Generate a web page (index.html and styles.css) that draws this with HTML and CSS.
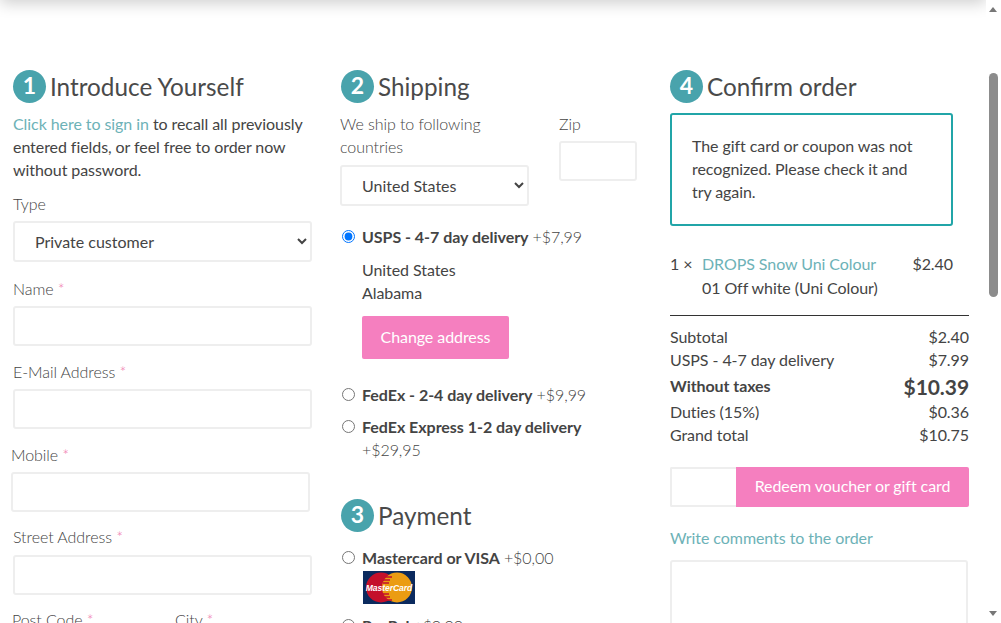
FILE: index.html
```html
<!DOCTYPE html>
<html lang="en">
<head>
    <meta charset="UTF-8">
    <title>Checkout</title>
    <link rel="stylesheet" href="styles.css">
</head>
<body>
    <div class="page">
        <div class="top-shadow"></div>
        <main class="checkout">
            <section class="col">
                <h2 class="step"><span class="step-num">1</span>Introduce Yourself</h2>
                <p class="intro"><a href="#">Click here to sign in</a> to recall all previously entered fields, or feel free to order now without password.</p>
                <label class="field-label type-label">Type</label>
                <select class="control select-type"><option>Private customer</option></select>
                <label class="field-label">Name <span class="req">*</span></label>
                <input class="control" type="text">
                <label class="field-label">E-Mail Address <span class="req">*</span></label>
                <input class="control" type="text">
                <div class="shifted">
                    <label class="field-label">Mobile <span class="req">*</span></label>
                    <input class="control" type="text">
                </div>
                <label class="field-label street-label">Street Address <span class="req">*</span></label>
                <input class="control" type="text">
                <div class="post-row">
                    <label class="field-label">Post Code <span class="req">*</span></label>
                    <label class="field-label">City <span class="req">*</span></label>
                </div>
            </section>

            <section class="col">
                <h2 class="step"><span class="step-num">2</span>Shipping</h2>
                <div class="ship-row">
                    <div class="ship-country">
                        <label class="field-label">We ship to following countries</label>
                        <select class="control select-country"><option>United States</option></select>
                    </div>
                    <div class="ship-zip">
                        <label class="field-label">Zip</label>
                        <input class="control" type="text">
                    </div>
                </div>
                <label class="option first-option">
                    <input type="radio" name="ship" checked>
                    <span><b>USPS - 4-7 day delivery</b> <i>+$7,99</i></span>
                </label>
                <div class="address">United States<br>Alabama</div>
                <button class="btn change-btn">Change address</button>
                <label class="option fedex-option">
                    <input type="radio" name="ship">
                    <span><b>FedEx - 2-4 day delivery</b> <i>+$9,99</i></span>
                </label>
                <label class="option express-option">
                    <input type="radio" name="ship">
                    <span><b>FedEx Express 1-2 day delivery</b> <i>+$29,95</i></span>
                </label>
                <h2 class="step payment-step"><span class="step-num">3</span>Payment</h2>
                <label class="option">
                    <input type="radio" name="pay">
                    <span><b>Mastercard or VISA</b> <i>+$0,00</i></span>
                </label>
                <svg class="card-logo" viewBox="0 0 52 33" width="52" height="33">
                    <rect width="52" height="33" fill="#0b2a5e"/>
                    <circle cx="18" cy="16.5" r="15" fill="#c4102b"/>
                    <circle cx="34" cy="16.5" r="15" fill="#eb9c12"/>
                    <path d="M21 6h8M20 9h7M20 12h6M20 23h6M20 26h7M22 29h7" stroke="#c4102b" stroke-width="1.4"/>
                    <text x="26" y="20" text-anchor="middle" class="card-text">MasterCard</text>
                </svg>
                <label class="option paypal-option">
                    <input type="radio" name="pay">
                    <span><b>PayPal</b> <i>+$0,00</i></span>
                </label>
            </section>

            <section class="col">
                <h2 class="step"><span class="step-num">4</span>Confirm order</h2>
                <div class="notice">The gift card or coupon was not recognized. Please check it and try again.</div>
                <div class="line-item">
                    <span class="qty">1 ×</span>
                    <div class="item-name"><a href="#">DROPS Snow Uni Colour</a><br>01 Off white (Uni Colour)</div>
                    <span>$2.40</span>
                </div>
                <div class="totals">
                    <div class="total-row"><span>Subtotal</span><span>$2.40</span></div>
                    <div class="total-row"><span>USPS - 4-7 day delivery</span><span>$7.99</span></div>
                    <div class="total-row total-strong"><b>Without taxes</b><b class="total-big">$10.39</b></div>
                    <div class="total-row"><span>Duties (15%)</span><span>$0.36</span></div>
                    <div class="total-row"><span>Grand total</span><span>$10.75</span></div>
                </div>
                <div class="voucher">
                    <input class="voucher-input" type="text">
                    <button class="btn voucher-btn">Redeem voucher or gift card</button>
                </div>
                <a class="comments-link" href="#">Write comments to the order</a>
                <textarea class="comments"></textarea>
            </section>
        </main>
        <div class="scrollbar">
            <span class="arrow arrow-up"></span>
            <div class="thumb"></div>
            <span class="arrow arrow-down"></span>
        </div>
    </div>
</body>
</html>
```

FILE: styles.css
```css
* {
    box-sizing: border-box;
}
html, body {
    margin: 0;
    height: 100%;
    overflow: hidden;
}
body {
    font-family: 'Lato', sans-serif;
    font-size: 16px;
    line-height: 23px;
    letter-spacing: -0.07px;
    color: #444;
    background-color: #fff;
}
a {
    color: #6db2b7;
    text-decoration: none;
}
.page {
    display: flex;
    height: 623px;
    overflow: hidden;
    position: relative;
}
.top-shadow {
    position: absolute;
    top: -30px;
    left: 0;
    width: 986px;
    height: 30px;
    box-shadow: 0 3px 16px rgba(0, 0, 0, 0.2);
}
.checkout {
    flex: 1;
    display: grid;
    grid-template-columns: 299px 300px 299px;
    column-gap: 29px;
    padding: 70px 0 0 13px;
    align-items: start;
}
.step {
    display: flex;
    align-items: center;
    margin: 0;
    height: 32px;
    font-size: 24.3px;
    font-weight: 400;
    letter-spacing: 0;
    color: #4a4a4a;
}
.step-num {
    flex: none;
    width: 33px;
    height: 33px;
    margin-right: 4px;
    border-radius: 50%;
    background-color: #49a3ac;
    color: #fff;
    font-size: 23px;
    font-weight: 700;
    line-height: 31px;
    text-align: center;
}
.intro {
    margin: 10px 0 0;
}
.field-label {
    display: block;
    font-weight: 300;
    color: #444;
    margin: 0;
}
.type-label {
    margin-top: 11px;
}
.street-label {
    margin-bottom: 7px;
}
.req {
    color: #ef6fa8;
}
.control {
    display: block;
    width: 100%;
    height: 40px;
    margin: 6px 0 14px;
    border: 2px solid #eee;
    border-radius: 3px;
    background-color: #fff;
    font-family: inherit;
    font-size: 16px;
    color: #444;
}
.street-label + .control {
    margin-top: 0;
}
select.control {
    height: 41px;
    padding-left: 16px;
}
.select-type {
    margin-bottom: 15px;
}
.shifted {
    margin: 0 2px 0 -2px;
}
.shifted .control {
    margin-bottom: 13px;
}
.post-row {
    display: grid;
    grid-template-columns: 163px 1fr;
    margin: -1px 0 0 -1px;
}

.ship-row {
    display: flex;
    margin-top: 10px;
    margin-left: -1px;
}
.ship-country {
    width: 189px;
    margin-right: 30px;
}
.ship-country .field-label {
    width: 160px;
}
.ship-country .control {
    margin: 7px 0 0;
}
.ship-zip {
    width: 78px;
}
.ship-zip .control {
    margin: 6px 0 0;
}
.option {
    display: flex;
    align-items: flex-start;
}
.option input {
    flex: none;
    width: 13px;
    height: 13px;
    margin: 5px 7px 0 1px;
}
.option b {
    font-weight: 700;
    letter-spacing: -0.03px;
}
.option i {
    font-style: normal;
    font-weight: 300;
}
.first-option {
    margin-top: 19px;
}
.address {
    margin: 10px 0 0 21px;
}
.btn {
    border: none;
    border-radius: 2px;
    background-color: #f57fbf;
    color: #fff;
    font-family: inherit;
    font-size: 16px;
    letter-spacing: -0.07px;
}
.change-btn {
    display: block;
    width: 147px;
    height: 43px;
    margin: 12px 0 0 21px;
    padding-bottom: 3px;
}
.fedex-option {
    margin-top: 24px;
}
.express-option {
    margin-top: 9px;
}
.payment-step {
    margin-top: 38px;
}
.payment-step + .option {
    margin-top: 15px;
}
.card-logo {
    display: block;
    margin: 2px 0 0 22px;
}
.card-text {
    font-family: 'Liberation Sans', sans-serif;
    font-size: 8.6px;
    font-weight: 700;
    font-style: italic;
    fill: #fff;
}
.paypal-option {
    margin-top: 10px;
}

.notice {
    width: 283px;
    height: 113px;
    margin-top: 11px;
    padding: 19px 36px 19px 20px;
    border: 2px solid #21a5a8;
    border-radius: 3px;
}
.line-item {
    display: flex;
    width: 283px;
    margin-top: 26px;
    line-height: 24px;
}
.qty {
    width: 32px;
}
.item-name {
    flex: 1;
}
.totals {
    margin-top: 15px;
    padding-top: 9px;
    border-top: 1px solid #333;
}
.total-row {
    display: flex;
    justify-content: space-between;
    align-items: center;
}
.total-strong {
    height: 29px;
}
.total-big {
    margin-top: 2px;
    font-size: 21px;
}
.voucher {
    display: flex;
    margin-top: 21px;
    height: 40px;
}
.voucher-input {
    width: 66px;
    height: 40px;
    border: 2px solid #eee;
    border-right: none;
    border-radius: 2px 0 0 2px;
}
.voucher-btn {
    flex: 1;
    padding-bottom: 4px;
    border-radius: 0 2px 2px 0;
}
.comments-link {
    display: block;
    margin-top: 19px;
}
.comments {
    display: block;
    width: 298px;
    height: 120px;
    margin-top: 11px;
    border: 2px solid #eee;
    border-radius: 3px;
    resize: none;
}

.scrollbar {
    flex: none;
    width: 15px;
    height: 623px;
    position: relative;
    background-color: #fff;
}
.thumb {
    position: absolute;
    top: 73px;
    left: 3px;
    width: 9px;
    height: 224px;
    border-radius: 5px;
    background-color: #8c8c8c;
}
.arrow {
    position: absolute;
    left: 3px;
    width: 0;
    height: 0;
    border-left: 4px solid transparent;
    border-right: 4px solid transparent;
}
.arrow-up {
    top: 7px;
    border-bottom: 5px solid #777;
}
.arrow-down {
    top: 611px;
    border-top: 5px solid #777;
}
```
